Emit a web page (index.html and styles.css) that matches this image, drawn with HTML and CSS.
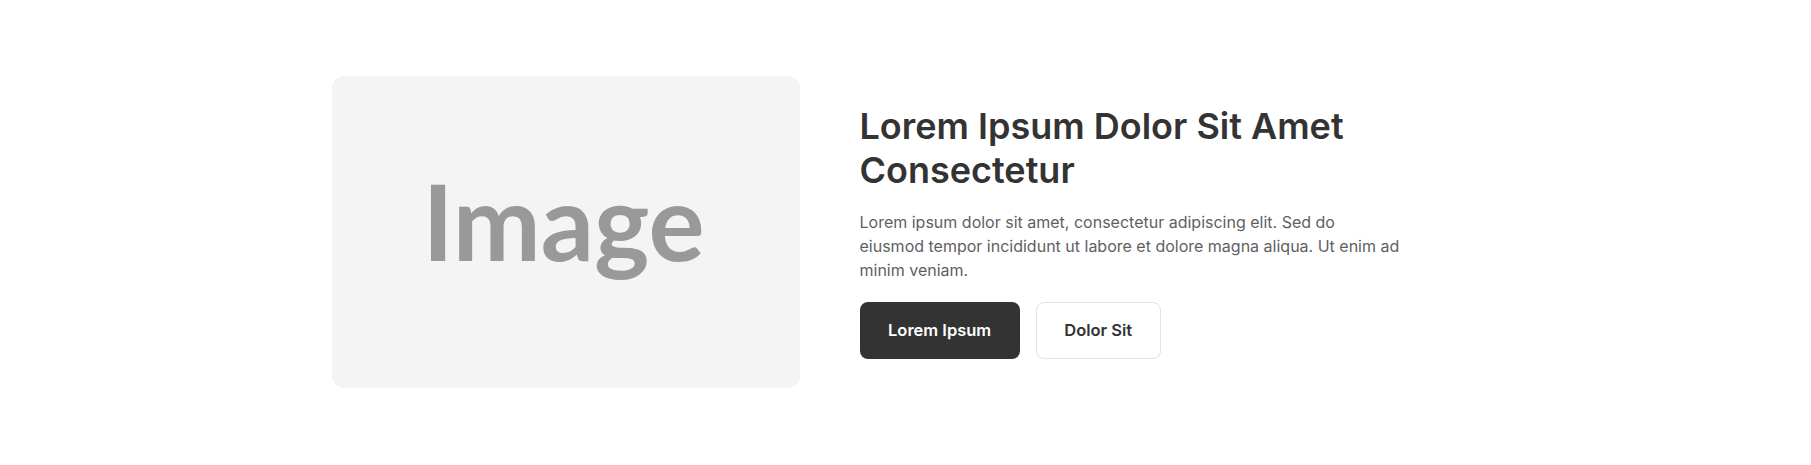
FILE: index.html
```html
<!DOCTYPE html>
<html lang="en">

<head>
    <meta charset="UTF-8">
    <meta name="viewport" content="width=device-width, initial-scale=1.0">
    <title>feature</title>
    <link rel="stylesheet" href="styles.css">
</head>

<body>
    <section class="feature">
        <div class="feature-media">
            <span class="placeholder">Image</span>
        </div>
        <div class="feature-body">
            <h2 class="feature-title">Lorem Ipsum Dolor Sit Amet Consectetur</h2>
            <p class="feature-text">Lorem ipsum dolor sit amet, consectetur adipiscing elit. Sed do eiusmod tempor incididunt ut labore et dolore magna aliqua. Ut enim ad minim veniam.</p>
            <div class="actions">
                <a href="#" class="btn btn-primary">Lorem Ipsum</a>
                <a href="#" class="btn btn-outline">Dolor Sit</a>
            </div>
        </div>
    </section>
</body>

</html>
```

FILE: styles.css
```css
body {
    margin: 0;
    background: #fff;
    font-family: Inter, "Noto Sans", sans-serif;
}

.feature {
    width: 1148px;
    height: 463px;
    margin: 0 auto;
    display: flex;
    align-items: center;
    gap: 60px;
}

.feature-media {
    flex: 0 0 468px;
    height: 312px;
    background: #f4f4f4;
    border-radius: 12px;
    display: flex;
    justify-content: center;
    align-items: center;
    box-sizing: border-box;
    padding: 0 4px 22px 0;
}

.placeholder {
    font-family: Lato, sans-serif;
    font-weight: 700;
    font-size: 105px;
    line-height: 1;
    color: #999;
}

.feature-body {
    flex: 1;
    margin-top: -1px;
}

.feature-title {
    max-width: 540px;
    margin: 0 0 18px;
    font-size: 36px;
    line-height: 44px;
    font-weight: 600;
    color: #333;
}

.feature-text {
    max-width: 540px;
    margin: 0 0 20px;
    font-size: 16px;
    line-height: 24px;
    color: #5f5f5f;
}

.actions {
    display: flex;
    gap: 16px;
}

.btn {
    display: inline-block;
    padding: 16px 27.5px;
    border: 1px solid transparent;
    border-radius: 8px;
    font-size: 16.5px;
    line-height: 23px;
    font-weight: 600;
    text-decoration: none;
}

.btn-primary {
    background: #333;
    color: #fff;
}

.btn-outline {
    background: #fff;
    border-color: #e2e2e2;
    color: #333;
}
```
